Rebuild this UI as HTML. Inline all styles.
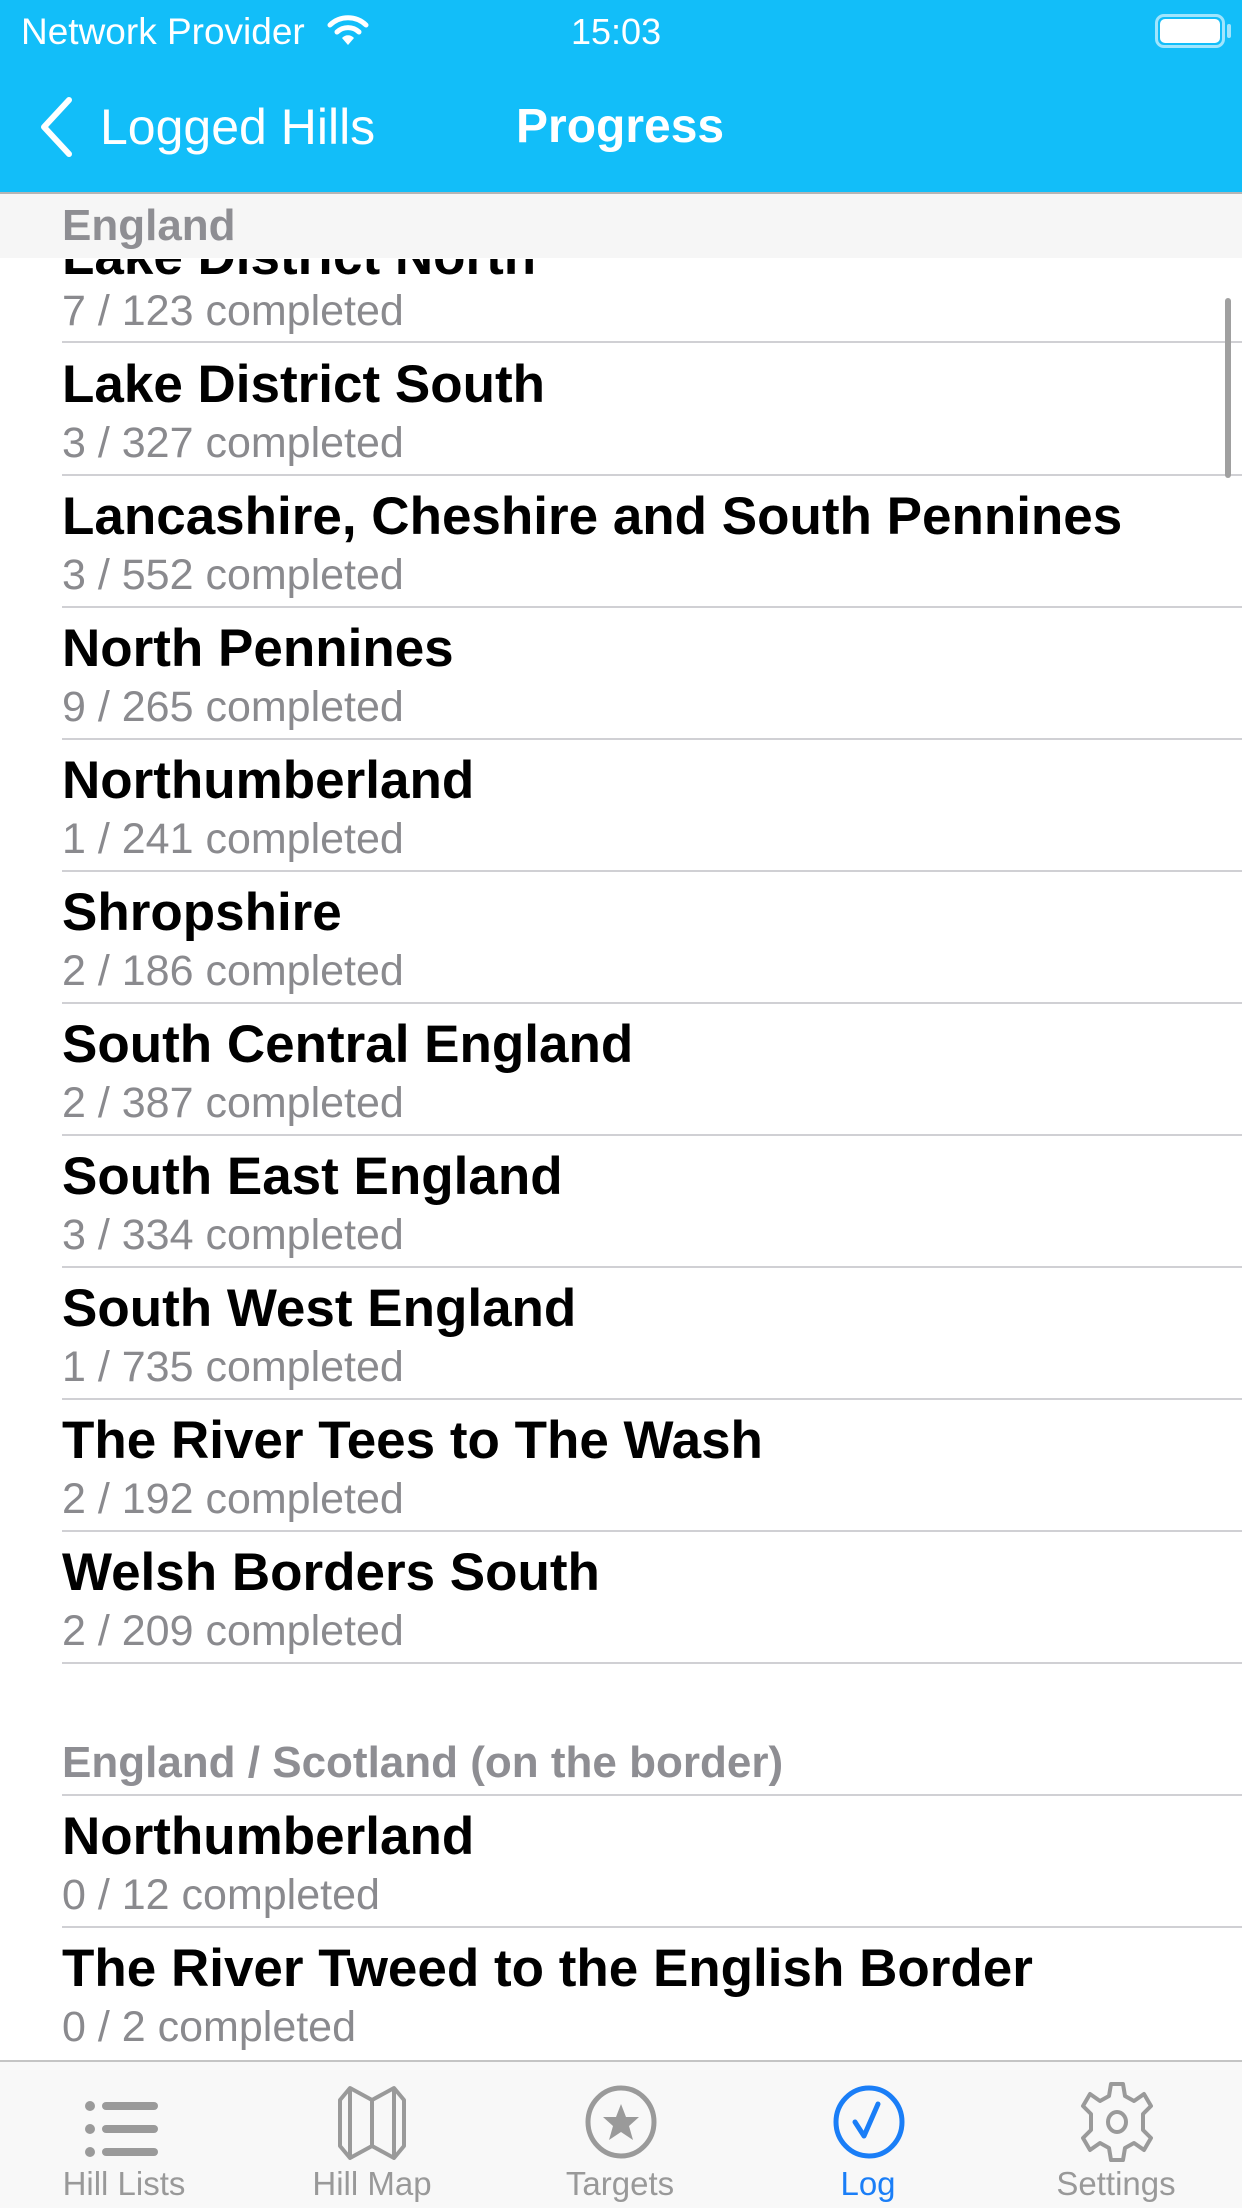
<!DOCTYPE html>
<html><head><meta charset="utf-8"><style>
*{margin:0;padding:0;box-sizing:border-box}
body{width:1242px;height:2208px;position:relative;overflow:hidden;background:#fff;font-family:"Liberation Sans",sans-serif}
.a{position:absolute;white-space:nowrap}
.t{left:62px;font-weight:bold;font-size:53px;color:#000;line-height:60px}
.s{left:62px;font-size:43px;color:#8a8a8e;line-height:50px}
.h{left:62px;font-size:44px;font-weight:bold;color:#8e8e93;line-height:50px}
.sep{position:absolute;left:62px;right:0;height:2px;background:#d0d0d4}
.tab{position:absolute;top:2060px;width:248px;text-align:center}
.tab .l{position:absolute;top:105px;left:0;right:0;font-size:33px;color:#999}
</style></head><body>
<div class="a" style="left:0;top:0;width:1242px;height:192px;background:#12BEF9"></div>
<div class="a" style="left:21px;top:10px;font-size:37px;color:#fff;line-height:44px">Network Provider</div>
<svg class="a" style="left:326px;top:12px" width="44" height="36" viewBox="0 0 44 36"><path d="M4 13 A26 26 0 0 1 40 13" stroke="#fff" stroke-width="5" fill="none" stroke-linecap="round"/><path d="M11 20 A16 16 0 0 1 33 20" stroke="#fff" stroke-width="5" fill="none" stroke-linecap="round"/><path d="M16 26 L22 33 L28 26 A8 8 0 0 0 16 26Z" fill="#fff"/></svg>
<div class="a" style="left:571px;top:10px;font-size:36px;color:#fff;line-height:44px">15:03</div>
<div class="a" style="left:1155px;top:14px;width:70px;height:34px;border:3px solid rgba(255,255,255,.6);border-radius:9px"></div>
<div class="a" style="left:1160px;top:19px;width:60px;height:24px;background:#fff;border-radius:5px"></div>
<div class="a" style="left:1227px;top:24px;width:4px;height:14px;background:rgba(255,255,255,.6);border-radius:2px"></div>
<svg class="a" style="left:36px;top:96px" width="40" height="62" viewBox="0 0 40 62"><path d="M33 4 L8 31 L33 58" stroke="#fff" stroke-width="6" fill="none" stroke-linecap="round" stroke-linejoin="round"/></svg>
<div class="a" style="left:100px;top:99px;font-size:50px;color:#fff;line-height:56px">Logged Hills</div>
<div class="a" style="left:516px;top:99px;font-size:48px;font-weight:bold;color:#fff;line-height:56px">Progress</div>

<div class="a t" style="top:227px;clip-path:inset(32px 0 0 0)">Lake District North</div>
<div class="a" style="left:0;top:192px;width:1242px;height:66px;background:#f6f6f6;border-top:2px solid #b5b5b5"></div>
<div class="a h" style="top:201px">England</div>
<div class="a s" style="top:286px">7 / 123 completed</div>
<div class="sep" style="top:341px"></div>

<div class="a t" style="top:355px">Lake District South</div><div class="a s" style="top:418px">3 / 327 completed</div><div class="sep" style="top:474px"></div>
<div class="a t" style="top:487px">Lancashire, Cheshire and South Pennines</div><div class="a s" style="top:550px">3 / 552 completed</div><div class="sep" style="top:606px"></div>
<div class="a t" style="top:619px">North Pennines</div><div class="a s" style="top:682px">9 / 265 completed</div><div class="sep" style="top:738px"></div>
<div class="a t" style="top:751px">Northumberland</div><div class="a s" style="top:814px">1 / 241 completed</div><div class="sep" style="top:870px"></div>
<div class="a t" style="top:883px">Shropshire</div><div class="a s" style="top:946px">2 / 186 completed</div><div class="sep" style="top:1002px"></div>
<div class="a t" style="top:1015px">South Central England</div><div class="a s" style="top:1078px">2 / 387 completed</div><div class="sep" style="top:1134px"></div>
<div class="a t" style="top:1147px">South East England</div><div class="a s" style="top:1210px">3 / 334 completed</div><div class="sep" style="top:1266px"></div>
<div class="a t" style="top:1279px">South West England</div><div class="a s" style="top:1342px">1 / 735 completed</div><div class="sep" style="top:1398px"></div>
<div class="a t" style="top:1411px">The River Tees to The Wash</div><div class="a s" style="top:1474px">2 / 192 completed</div><div class="sep" style="top:1530px"></div>
<div class="a t" style="top:1543px">Welsh Borders South</div><div class="a s" style="top:1606px">2 / 209 completed</div><div class="sep" style="top:1662px"></div>

<div class="a h" style="top:1738px">England / Scotland (on the border)</div>
<div class="sep" style="top:1794px"></div>
<div class="a t" style="top:1807px">Northumberland</div><div class="a s" style="top:1870px">0 / 12 completed</div><div class="sep" style="top:1926px"></div>
<div class="a t" style="top:1939px">The River Tweed to the English Border</div><div class="a s" style="top:2002px">0 / 2 completed</div>

<div class="a" style="left:1225px;top:298px;width:6px;height:180px;background:#a0a0a0;border-radius:3px"></div>

<div class="a" style="left:0;top:2060px;width:1242px;height:148px;background:#f8f8f8;border-top:2px solid #c4c4c4"></div>
<div class="tab" style="left:0"><svg style="position:absolute;left:84px;top:38px" width="80" height="62" viewBox="0 0 80 62"><g fill="#9a9a9a"><circle cx="6" cy="8" r="5"/><circle cx="6" cy="31" r="5"/><circle cx="6" cy="54" r="5"/><rect x="18" y="4" width="56" height="8" rx="4"/><rect x="18" y="27" width="56" height="8" rx="4"/><rect x="18" y="50" width="56" height="8" rx="4"/></g></svg><div class="l">Hill Lists</div></div>
<div class="tab" style="left:248px"><svg style="position:absolute;left:88px;top:24px" width="72" height="78" viewBox="0 0 72 78"><path d="M4 16 L14 4 L36 16 L58 4 L68 16 L68 62 L58 74 L36 62 L14 74 L4 62 Z M14 4 V74 M36 16 V62 M58 4 V74" stroke="#9a9a9a" stroke-width="4" fill="none" stroke-linejoin="round"/></svg><div class="l">Hill Map</div></div>
<div class="tab" style="left:496px"><svg style="position:absolute;left:88px;top:24px" width="74" height="76" viewBox="0 0 74 76"><ellipse cx="37" cy="38" rx="33" ry="34" stroke="#9a9a9a" stroke-width="5" fill="none"/><path d="M37 20 L42 33 L55 33 L45 42 L49 56 L37 48 L25 56 L29 42 L19 33 L32 33Z" fill="#9a9a9a"/></svg><div class="l">Targets</div></div>
<div class="tab" style="left:744px"><svg style="position:absolute;left:88px;top:24px" width="74" height="76" viewBox="0 0 74 76"><ellipse cx="37" cy="38" rx="33" ry="34" stroke="#1a7ef7" stroke-width="5" fill="none"/><path d="M23 38 L32 52 L46 20" stroke="#1a7ef7" stroke-width="5" fill="none" stroke-linecap="round" stroke-linejoin="round"/></svg><div class="l" style="color:#1a7ef7">Log</div></div>
<div class="tab" style="left:992px"><svg style="position:absolute;left:86px;top:20px" width="78" height="84" viewBox="0 0 78 84"><path d="M33 4 H45 L47 16 L56 21 L66 14 L73 26 L65 34 V50 L73 58 L66 70 L56 63 L47 68 L45 80 H33 L31 68 L22 63 L12 70 L5 58 L13 50 V34 L5 26 L12 14 L22 21 L31 16 Z" stroke="#9a9a9a" stroke-width="4" fill="none" stroke-linejoin="round"/><ellipse cx="39" cy="42" rx="9" ry="10" stroke="#9a9a9a" stroke-width="4" fill="none"/></svg><div class="l">Settings</div></div>
</body></html>
